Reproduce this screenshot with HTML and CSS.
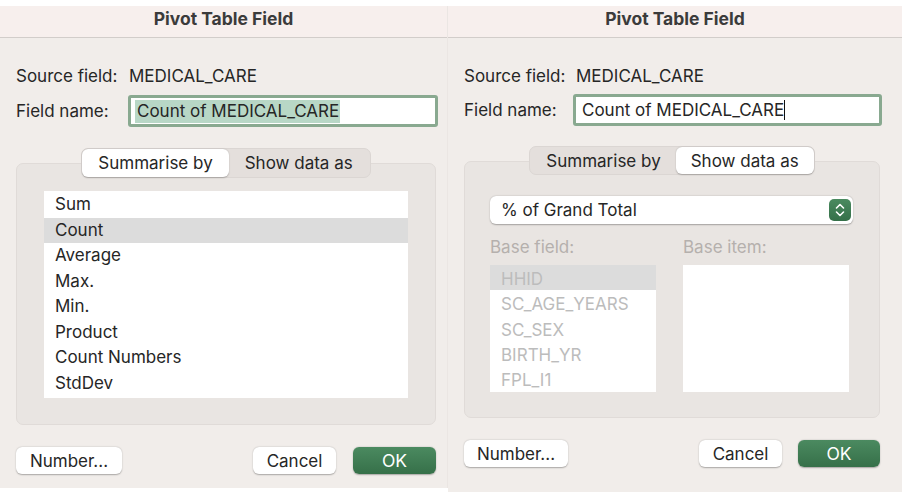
FILE: index.html
```html
<!DOCTYPE html>
<html>
<head>
<meta charset="utf-8">
<link rel="stylesheet" href="styles.css">
</head>
<body>
<div class="screen">
  <div class="dialog dialog-left">
    <div class="titlebar">Pivot Table Field</div>
    <div class="content">
      <div class="row row-source"><span class="label">Source field:</span><span class="value">MEDICAL_CARE</span></div>
      <div class="row row-name"><span class="label">Field name:</span><div class="input"><span class="sel">Count of MEDICAL_CARE</span></div></div>
      <div class="segmented">
        <div class="seg seg-on">Summarise by</div>
        <div class="seg">Show data as</div>
      </div>
      <div class="group">
        <div class="list">
          <div class="item">Sum</div>
          <div class="item item-hl">Count</div>
          <div class="item">Average</div>
          <div class="item">Max.</div>
          <div class="item">Min.</div>
          <div class="item">Product</div>
          <div class="item">Count Numbers</div>
          <div class="item">StdDev</div>
        </div>
      </div>
      <div class="buttons">
        <div class="btn btn-number">Number...</div>
        <div class="spacer"></div>
        <div class="btn btn-cancel">Cancel</div>
        <div class="btn btn-ok">OK</div>
      </div>
    </div>
  </div>
  <div class="dialog dialog-right">
    <div class="titlebar">Pivot Table Field</div>
    <div class="content">
      <div class="row row-source"><span class="label">Source field:</span><span class="value">MEDICAL_CARE</span></div>
      <div class="row row-name"><span class="label">Field name:</span><div class="input"><span class="plain">Count of MEDICAL_CARE</span><span class="caret"></span></div></div>
      <div class="segmented">
        <div class="seg">Summarise by</div>
        <div class="seg seg-on">Show data as</div>
      </div>
      <div class="group">
        <div class="select">
          <span>% of Grand Total</span>
          <span class="stepper"><svg width="22" height="22" viewBox="0 0 22 22"><path d="M7.5 9 L11 5.5 L14.5 9" fill="none" stroke="#fff" stroke-width="1.6" stroke-linecap="round" stroke-linejoin="round"/><path d="M7.5 13 L11 16.5 L14.5 13" fill="none" stroke="#fff" stroke-width="1.6" stroke-linecap="round" stroke-linejoin="round"/></svg></span>
        </div>
        <div class="base">
          <div class="base-col">
            <div class="base-label">Base field:</div>
            <div class="base-list">
              <div class="bitem bitem-hl">HHID</div>
              <div class="bitem">SC_AGE_YEARS</div>
              <div class="bitem">SC_SEX</div>
              <div class="bitem">BIRTH_YR</div>
              <div class="bitem">FPL_I1</div>
            </div>
          </div>
          <div class="base-col">
            <div class="base-label">Base item:</div>
            <div class="base-list"></div>
          </div>
        </div>
      </div>
      <div class="buttons">
        <div class="btn btn-number">Number...</div>
        <div class="spacer"></div>
        <div class="btn btn-cancel">Cancel</div>
        <div class="btn btn-ok">OK</div>
      </div>
    </div>
  </div>
</div>
</body>
</html>
```
FILE: styles.css
```css
* { box-sizing: border-box; }
html, body { margin: 0; padding: 0; background: #ffffff; }
body {
  font-family: "Inter", "Liberation Sans", sans-serif;
  font-size: 17px;
  color: #262626;
  width: 902px;
  height: 492px;
  overflow: hidden;
}
.screen {
  display: flex;
  padding-top: 6px;
  height: 492px;
}
.dialog {
  display: flex;
  flex-direction: column;
  background: #f1edea;
}
.dialog-left { width: 448px; height: 482px; border-right: 1px solid #ebe6e3; }
.dialog-right { width: 454px; height: 486px; }
.titlebar {
  height: 32px;
  flex: none;
  background: #f7efed;
  border-bottom: 1px solid #d2cdca;
  font-weight: 700;
  font-size: 17.5px;
  color: #3b3b3b;
  display: flex;
  align-items: center;
  justify-content: center;
  padding-bottom: 6px;
}
.content { padding-left: 16px; display: flex; flex-direction: column; }
.dialog-left .content { padding-right: 11px; }
.dialog-right .content { padding-right: 22px; }

.row { display: flex; align-items: center; }
.label { width: 113px; flex: none; }
.dialog-right .label { width: 112px; }
.row-source { height: 22px; margin-top: 27px; }
.row-name { margin-top: 8px; }
.dialog-right .row-name { margin-top: 7px; }
.dialog-left .row-name .label { width: 112px; }
.input {
  flex: 1;
  height: 32px;
  border: 3px solid #89a990;
  border-radius: 3px;
  background: #ffffff;
  display: flex;
  align-items: center;
  padding-left: 4px;
}
.dialog-left .input { margin-right: -2px; }
.dialog-right .input { margin-left: -3px; margin-right: -2px; }
.sel { background: #b8d7c6; padding: 1px 1px 2px 2px; }
.plain { padding-left: 2px; }
.caret { width: 1px; height: 20px; background: #111; }

.segmented {
  align-self: center;
  display: flex;
  height: 30px;
  background: #e4dfdc;
  border: 1px solid #dbd6d3;
  border-radius: 7px;
  margin-top: 21px;
  margin-bottom: -15px;
  position: relative;
  z-index: 1;
}
.dialog-right .segmented { height: 29px; margin-top: 20px; margin-bottom: -14px; }
.seg {
  display: flex;
  align-items: center;
  padding: 0 16px;
  border-radius: 6px;
  white-space: nowrap;
}
.dialog-left .seg:last-child { padding: 0 17px 0 16px; }
.dialog-right .seg:first-child { padding: 0 15px 0 16px; }
.dialog-right .seg:last-child { padding: 0 15px 0 15px; }
.seg-on { background: #ffffff; box-shadow: 0 0.5px 1.5px rgba(0,0,0,0.25); }

.group {
  background: #e9e5e2;
  border: 1px solid #e0dbd8;
  border-radius: 7px;
  padding: 27px 27px 27px 27px;
}
.dialog-left .group { height: 262px; }
.dialog-right .group { height: 257px; padding: 34px 26px 25px 25px; }

.list { background: #ffffff; height: 207px; padding-top: 1px; }
.item { height: 25.5px; line-height: 25.5px; padding-left: 11px; }
.item-hl { background: #dcdcdc; }

.select {
  height: 28px;
  background: #ffffff;
  border-radius: 6px;
  box-shadow: 0 0.5px 1.5px rgba(0,0,0,0.3);
  display: flex;
  align-items: center;
  justify-content: space-between;
  padding: 0 2px 0 11px;
}
.stepper {
  width: 22px;
  height: 22px;
  border-radius: 5px;
  background: linear-gradient(#4a8a5f, #357049);
  display: flex;
}
.base { display: flex; gap: 27px; margin-top: 13px; }
.base-col { width: 166px; }
.base-label { color: #b5b0ad; height: 22px; line-height: 20px; margin-bottom: 6px; }
.base-list { background: #ffffff; height: 127px; }
.bitem { height: 25.3px; line-height: 28px; padding-left: 11px; color: #bcbcbc; }
.bitem-hl { background: #dcdcdc; }

.buttons { display: flex; align-items: center; margin-top: 22px; }
.spacer { flex: 1; }
.btn {
  height: 27px;
  background: #ffffff;
  border-radius: 6px;
  box-shadow: 0 0.5px 1.5px rgba(0,0,0,0.3);
  display: flex;
  align-items: center;
  justify-content: center;
}
.btn-number { width: 106px; }
.btn-cancel { width: 83px; margin-right: 17px; }
.btn-ok {
  width: 83px;
  background: linear-gradient(#4b8a60, #367049);
  color: #ffffff;
  font-size: 17.5px;
}
.dialog-right .btn-number { width: 104px; }
.dialog-right .btn-ok { width: 82px; }
.dialog-right .btn-cancel { margin-right: 16px; }
```
